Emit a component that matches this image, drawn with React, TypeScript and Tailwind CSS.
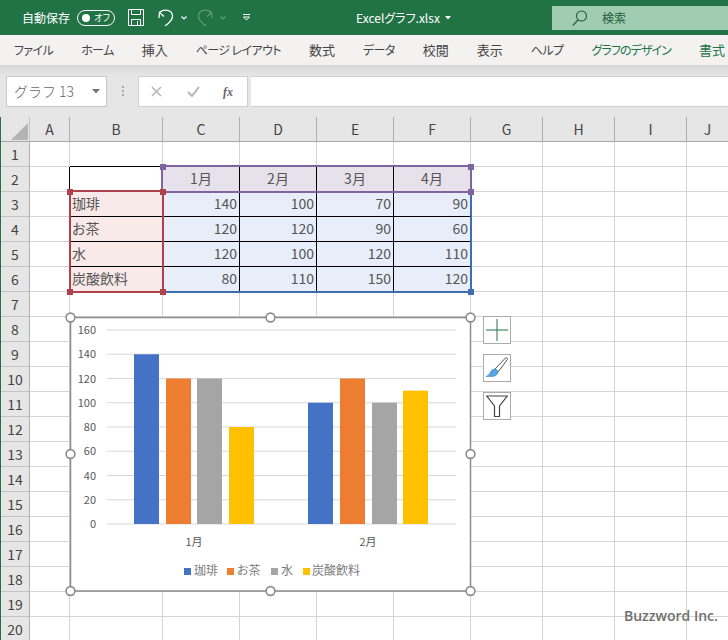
const colWidths = ['A', 'B', 'C', 'D', 'E', 'F', 'G', 'H', 'I', 'J'];

const cells: Record<string, string> = {
  C2: '1月', D2: '2月', E2: '3月', F2: '4月',
  B3: '珈琲', C3: '140', D3: '100', E3: '70', F3: '90',
  B4: 'お茶', C4: '120', D4: '120', E4: '90', F4: '60',
  B5: '水', C5: '120', D5: '100', E5: '120', F5: '110',
  B6: '炭酸飲料', C6: '80', D6: '110', E6: '150', F6: '120',
};

const tabs = [
  { label: 'ファイル', kana: true },
  { label: 'ホーム', kana: true },
  { label: '挿入', kana: false },
  { label: 'ページ レイアウト', kana: true },
  { label: '数式', kana: false },
  { label: 'データ', kana: true },
  { label: '校閲', kana: false },
  { label: '表示', kana: false },
  { label: 'ヘルプ', kana: true },
];

const rows = Array.from({ length: 20 }, (_, i) => i + 1);

const series = [
  { color: '#4472c4', xs: [134, 308], values: [140, 100] },
  { color: '#ed7d31', xs: [166, 340], values: [120, 120] },
  { color: '#a5a5a5', xs: [197, 372], values: [120, 100] },
  { color: '#ffc000', xs: [229, 403], values: [80, 110] },
];

function Cell({ col, row }: { col: string; row: number }) {
  const key = col + row;
  const text = cells[key];
  const inData = 'CDEF'.includes(col);

  let fill = 'bg-white';
  if (row === 2 && inData) fill = 'bg-[#e6e1ea]';
  if (row >= 3 && row <= 6 && inData) fill = 'bg-[#e7eef9]';
  if (row >= 3 && row <= 6 && col === 'B') fill = 'bg-[#f9eaea]';

  const inTable = row >= 2 && row <= 6 && 'BCDEF'.includes(col);
  const rightLine = (inTable && col !== 'F') || (col === 'A' && row === 2) ? 'border-r-black' : 'border-r-[#d4d4d4]';
  const bottomLine = (inTable && row < 6) || (row === 1 && col === 'B') ? 'border-b-black' : 'border-b-[#d4d4d4]';

  let align = 'justify-end pr-[2px]';
  if (row === 2) align = 'justify-center';
  if (col === 'B') align = 'justify-start pl-[2px]';

  return (
    <div className={`flex items-center pb-[1px] border-r border-b text-[14px] text-[#555] ${fill} ${rightLine} ${bottomLine} ${align}`}>
      {text}
    </div>
  );
}

function Handle({ className }: { className: string }) {
  return <div className={`absolute w-[6px] h-[6px] ${className}`} />;
}

function Chart() {
  return (
    <svg className="absolute left-[60px] top-[307px]" width={422} height={294} viewBox="60 307 422 294">
      <rect x={70.5} y={317.5} width={400} height={273.5} fill="#fff" stroke="#8c8c8c" strokeWidth={1.5} />
      {[0, 1, 2, 3, 4, 5, 6, 7, 8].map((n) => {
        const y = 524 - n * 24.25;
        return (
          <g key={n}>
            <line x1={107} x2={456} y1={y} y2={y} stroke="#d9d9d9" strokeWidth={1} />
            <text x={96} y={y + 4} textAnchor="end" fontSize={11} fill="#595959">{n * 20}</text>
          </g>
        );
      })}
      {series.map((s) =>
        s.xs.map((x, i) => {
          const h = s.values[i] * 1.2125;
          return <rect key={x} x={x} y={524 - h} width={25} height={h} fill={s.color} />;
        })
      )}
      <text x={194} y={546} textAnchor="middle" fontSize={11} fill="#595959">1月</text>
      <text x={368} y={546} textAnchor="middle" fontSize={11} fill="#595959">2月</text>

      <rect x={184} y={568} width={7} height={7} fill="#4472c4" />
      <text x={194} y={575} fontSize={12} fill="#7a7a7a">珈琲</text>
      <rect x={227} y={568} width={7} height={7} fill="#ed7d31" />
      <text x={237} y={575} fontSize={12} fill="#7a7a7a">お茶</text>
      <rect x={271} y={568} width={7} height={7} fill="#a5a5a5" />
      <text x={281} y={575} fontSize={12} fill="#7a7a7a">水</text>
      <rect x={303} y={568} width={7} height={7} fill="#ffc000" />
      <text x={312} y={575} fontSize={12} fill="#7a7a7a">炭酸飲料</text>

      {[
        [70.5, 317.5], [270.5, 317.5], [470.5, 317.5],
        [70.5, 454], [470.5, 454],
        [70.5, 591], [270.5, 591], [470.5, 591],
      ].map(([cx, cy]) => (
        <circle key={`${cx}-${cy}`} cx={cx} cy={cy} r={4.4} fill="#fff" stroke="#8c8c8c" strokeWidth={1.6} />
      ))}
    </svg>
  );
}

function ChartButton({ className, children }: { className: string; children: React.ReactNode }) {
  return (
    <div className={`absolute left-[483px] w-[28px] h-[28px] bg-white border border-[#ababab] flex items-center justify-center ${className}`}>
      {children}
    </div>
  );
}

export default function App() {
  return (
    <div
      className="relative w-[728px] h-[640px] overflow-hidden bg-white [font-feature-settings:'palt']"
      style={{ fontFamily: '"Noto Sans CJK JP", "Noto Sans", sans-serif' }}
    >
      {/* title bar */}
      <div className="h-[35px] bg-[#217346] flex items-center text-white relative">
        <span className="ml-[22px] text-[12px] w-[48px] whitespace-nowrap">自動保存</span>
        <div className="ml-[7px] w-[38px] h-[16px] rounded-full border border-white flex items-center justify-between px-[4px]">
          <div className="w-[8px] h-[8px] rounded-full bg-white" />
          <span className="text-[9px] leading-none">オフ</span>
        </div>
        <svg className="ml-[13px]" width="16" height="17" viewBox="0 0 16 17" fill="none" stroke="#fff" strokeWidth="1">
          <path d="M.5.5h15v16H.5z" />
          <path d="M3.5.5v5h9v-5M3.5 16.5v-6h9v6M9.5 12v4" />
        </svg>
        <svg className="ml-[14px]" width="16" height="18" viewBox="0 0 16 18" fill="none" stroke="#fff" strokeWidth="1.3">
          <path d="M6 7.5 1.5 3.5 1 9M1.5 3.5C6-.5 14 1 14.5 6.5c.4 5-4 8-7.5 10.5" />
        </svg>
        <svg className="ml-[7px]" width="6" height="4" viewBox="0 0 6 4" fill="none" stroke="#fff" strokeWidth="1.2">
          <path d="m.5.5 2.5 2.5L5.500.5" />
        </svg>
        <svg className="ml-[10px]" width="16" height="18" viewBox="0 0 16 18" fill="none" stroke="#5f9c79" strokeWidth="1.2">
          <path d="M10 7.500 14.500 3.500 15 9M14.500 3.500C10-.5 2 1 1.500 6.500c-.4 5 4 8 7.500 10.500" />
        </svg>
        <svg className="ml-[7px]" width="6" height="4" viewBox="0 0 6 4" fill="none" stroke="#5f9c79" strokeWidth="1.2">
          <path d="m.5.5 2.5 2.500L5.500.5" />
        </svg>
        <svg className="ml-[17px]" width="7" height="7" viewBox="0 0 7 7" fill="none" stroke="#fff" strokeWidth="1">
          <path d="M0 .5h7M.5 3l3 3 3-3z" />
        </svg>
        <span className="absolute left-[356px] text-[12px] whitespace-nowrap">Excelグラフ.xlsx</span>
        <svg className="absolute left-[445px] top-[16px]" width="6" height="4" viewBox="0 0 6 4" fill="#fff">
          <path d="M0 0h6L3 3.500z" />
        </svg>
        <div className="absolute left-[552px] right-0 top-[6px] h-[24px] bg-[#a0cdb1] flex items-center text-[#1d5f3b]">
          <svg className="ml-[20px]" width="16" height="16" viewBox="0 0 16 16" fill="none" stroke="#1d5f3b" strokeWidth="1.1">
            <circle cx="9.500" cy="6" r="5" />
            <path d="M6 10 .8 15.500" />
          </svg>
          <span className="ml-[14px] text-[12px]">検索</span>
        </div>
      </div>

      {/* ribbon tabs */}
      <div className="h-[30px] bg-[#f3f2f1] flex items-center pl-[14px] gap-[28px] text-[#444] whitespace-nowrap">
        {tabs.map((tab) => (
          <span key={tab.label} className={tab.kana ? 'text-[12px] tracking-[-0.6px]' : 'text-[13px]'}>{tab.label}</span>
        ))}
        <span className="text-[#217346] text-[12px] tracking-[-0.9px]">グラフのデザイン</span>
        <span className="text-[#217346] text-[13px]">書式</span>
      </div>

      {/* formula bar */}
      <div className="h-[52px] bg-[#e6e6e6] bg-gradient-to-b from-[#d6d6d6] from-0% to-[#e6e6e6] to-20% flex items-start pt-[11px]">
        <div className="ml-[6px] w-[101px] h-[31px] bg-white border border-[#c8c8c8] flex items-center justify-between pl-[7px] pr-[6px] text-[14px] text-[#666]">
          <span className="[font-feature-settings:normal] font-light">グラフ 13</span>
          <svg width="8" height="5" viewBox="0 0 8 5" fill="#777"><path d="M0 0h8L4 4.500z" /></svg>
        </div>
        <div className="ml-[15px] mt-[10px] flex flex-col gap-[2px]">
          <div className="w-[2px] h-[2px] bg-[#aaa]" />
          <div className="w-[2px] h-[2px] bg-[#aaa]" />
          <div className="w-[2px] h-[2px] bg-[#aaa]" />
        </div>
        <div className="ml-[14px] w-[110px] h-[31px] bg-white border border-[#d0d0d0] flex items-center">
          <svg className="ml-[12px]" width="11" height="11" viewBox="0 0 11 11" stroke="#b5b5b5" strokeWidth="1.500">
            <path d="m1 1 9 9M10 1l-9 9" />
          </svg>
          <svg className="ml-[25px]" width="13" height="11" viewBox="0 0 13 11" fill="none" stroke="#b5b5b5" strokeWidth="2">
            <path d="m1 6 4 4 7-9" />
          </svg>
          <span className="ml-[23px] text-[12px] italic font-bold text-[#666]" style={{ fontFamily: '"Liberation Serif", serif' }}>fx</span>
        </div>
        <div className="ml-[3px] flex-1 h-[31px] bg-white border-y border-[#d0d0d0]" />
      </div>

      {/* sheet */}
      <div className="border-l border-[#217346] grid grid-cols-[29px_40px_93px_77px_77px_77px_77px_72px_72px_72px_42px] auto-rows-[25px]">
        <div className="bg-[#e6e6e6] border-r border-b border-b-[#a8a8a8] border-r-[#c4c4c4] flex items-end justify-end pr-[1px] pb-[1px]">
          <div className="w-0 h-0 border-l-[17px] border-l-transparent border-b-[17px] border-b-[#b4b4b4]" />
        </div>
        {colWidths.map((col) => (
          <div key={col} className="bg-[#e6e6e6] border-r border-r-[#b0b0b0] border-b border-b-[#a8a8a8] flex items-center justify-center text-[14px] text-[#444]">
            {col}
          </div>
        ))}
        {rows.map((row) => (
          <div key={row} className="contents">
            <div className="bg-[#e6e6e6] border-r border-r-[#b0b0b0] border-b border-b-[#c4c4c4] flex items-center justify-center text-[14px] text-[#444]">
              {row}
            </div>
            {colWidths.map((col) => (
              <Cell key={col} col={col} row={row} />
            ))}
          </div>
        ))}
      </div>

      {/* range highlights */}
      <div className="absolute left-[163px] top-[192px] w-[309px] h-[101px] border-r-2 border-b-2 border-[#3f6db0]" />
      <div className="absolute left-[161px] top-[165px] w-[311px] h-[28px] border-2 border-[#8064a2]" />
      <div className="absolute left-[69px] top-[190px] w-[95px] h-[103px] border-2 border-[#b0414a]" />
      <Handle className="left-[160px] top-[164px] bg-[#8064a2]" />
      <Handle className="left-[468px] top-[164px] bg-[#8064a2]" />
      <Handle className="left-[468px] top-[189px] bg-[#8064a2]" />
      <Handle className="left-[67px] top-[189px] bg-[#b0414a]" />
      <Handle className="left-[160px] top-[189px] bg-[#b0414a]" />
      <Handle className="left-[67px] top-[289px] bg-[#b0414a]" />
      <Handle className="left-[160px] top-[289px] bg-[#b0414a]" />
      <Handle className="left-[468px] top-[289px] bg-[#3f6db0]" />

      <Chart />

      {/* chart side buttons */}
      <ChartButton className="top-[316px]">
        <svg width="22" height="22" viewBox="0 0 22 22" stroke="#217346" strokeWidth="1">
          <path d="M11 0v22M0 11h22" />
        </svg>
      </ChartButton>
      <ChartButton className="top-[354px]">
        <svg width="24" height="24" viewBox="0 0 24 24">
          <path d="M10 13 20.500 2c1-.8 2.500.5 1.800 1.700L13 16z" fill="#fff" stroke="#555" strokeWidth="1" />
          <path d="M9 13c2-.5 4 1 4 3.200-.2 2.500-3 4.300-6 4.300H1c2-1 3.500-2.200 4.500-4.500C6 14.500 7.500 13.300 9 13z" fill="#5ba3e0" stroke="#3f87c6" strokeWidth=".6" />
        </svg>
      </ChartButton>
      <ChartButton className="top-[392px]">
        <svg width="22" height="24" viewBox="0 0 22 24" fill="#fff" stroke="#444" strokeWidth="1.200">
          <path d="M.8 2h20.400l-7.700 10v10.500h-5V12z" />
        </svg>
      </ChartButton>

      {/* watermark */}
      <span className="absolute left-[624px] top-[605px] text-[14px] font-semibold text-[#707070] whitespace-nowrap" style={{ fontFamily: '"Open Sans", sans-serif' }}>
        Buzzword Inc.
      </span>
    </div>
  );
}
